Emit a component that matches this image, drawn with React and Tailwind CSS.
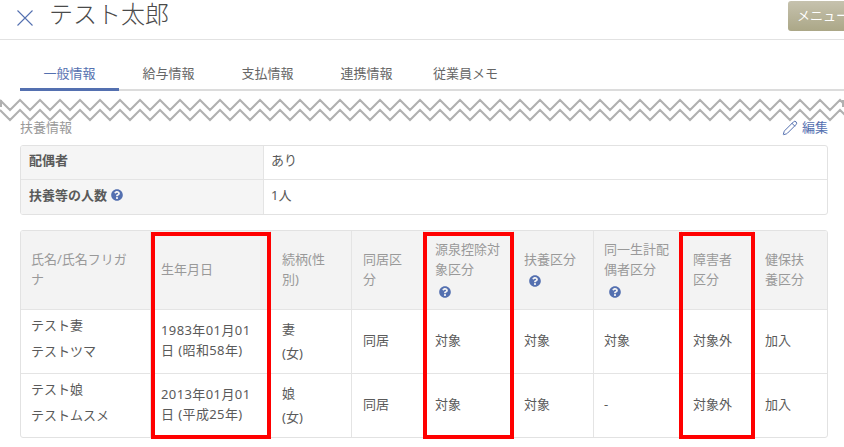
import { Pencil } from 'lucide-react'
import { FaQuestionCircle } from 'react-icons/fa'

const tabs = ['一般情報', '給与情報', '支払情報', '連携情報', '従業員メモ']

const rows = [
  { name: 'テスト妻', kana: 'テストツマ', birth: '1983年01月01日 (昭和58年)', rel: '妻', tax: '対象', dep: '対象', spouse: '対象' },
  { name: 'テスト娘', kana: 'テストムスメ', birth: '2013年01月01日 (平成25年)', rel: '娘', tax: '対象', dep: '対象', spouse: '-' },
]

const Help = ({ className = '' }) => <FaQuestionCircle className={`inline-block text-[12px] text-[#5470b0] ${className}`} />

const zigzag = (y) => {
  const pts = []
  for (let i = 0; i <= 43; i++) pts.push(`${i * 20},${y}`, `${i * 20 + 10},${y + 10}`)
  return pts.join(' ')
}

function Head({ children, className = 'pr-[16px] pl-[11px]' }) {
  return <th className={`border-r border-[#e4e4e4] pb-[2px] text-left align-middle font-normal leading-[20px] text-[#999] last:border-r-0 ${className}`}>{children}</th>
}

function Td({ children, className = 'pb-[2px] pl-[11px]' }) {
  return <td className={`border-t border-r border-[#e4e4e4] pr-[16px] align-middle last:border-r-0 ${className}`}>{children}</td>
}

export default function App() {
  return (
    <div className="relative h-[447px] w-[844px] overflow-hidden bg-white text-[13px] text-[#5a5a5a] font-['Noto_Sans','Noto_Sans_CJK_JP','Liberation_Sans',sans-serif]">
      <header className="flex h-[40px] items-start justify-between border-b border-[#e2e2e2]">
        <div className="flex items-center pl-[17px]">
          <svg width="16" height="16" viewBox="0 0 16 16" className="mt-[8px]" fill="none" stroke="#5470b0" strokeWidth="1.1">
            <path d="M0.5 0.5 L15.5 15.5 M15.5 0.5 L0.5 15.5" />
          </svg>
          <h1 className="mt-px ml-[16px] text-[24px] leading-[26px] font-light text-[#4a4a4a]">テスト太郎</h1>
        </div>
        <div className="mt-px h-[30px] w-[56px] overflow-hidden rounded-l-[3px] bg-gradient-to-b from-[#c6c2ae] to-[#aba787] pl-[9px] text-[13px] leading-[28px] whitespace-nowrap text-white">メニュー</div>
      </header>

      <nav className="mt-[27px] ml-[20px] flex h-[24px] border-b-2 border-[#dcdcdc]">
        {tabs.map((tab, i) => (
          <div key={tab} className={`-mb-[2px] h-[24px] w-[99px] text-center leading-[12px] ${i === 0 ? 'border-b-[3px] border-[#5470b0] text-[#5470b0]' : 'text-[#666]'}`}>
            {tab}
          </div>
        ))}
      </nav>

      <svg width="844" height="24" className="mt-[7px] block" fill="none" stroke="#b0b0b0" strokeWidth="2">
        <path d="M1 2 V9 M843 2 V9" />
        <polyline points={zigzag(2)} />
        <polyline points={zigzag(12)} />
      </svg>

      <div className="mt-[-6px] flex h-[24px] items-center justify-between pr-[16px] pl-[20px]">
        <span className="text-[#999]">扶養情報</span>
        <span className="flex items-center gap-[4px] text-[#5470b0]">
          <Pencil size={16} strokeWidth={1.5} />編集
        </span>
      </div>

      <table className="mx-[20px] mt-[5px] w-[808px] table-fixed border-separate border-spacing-0 overflow-hidden rounded-[3px] border border-[#e2e2e2]">
        <tbody>
          <tr className="h-[34px]">
            <th className="w-[243px] border-r border-b border-[#e4e4e4] bg-[#f5f5f5] pb-[3px] pl-[8px] text-left font-bold">配偶者</th>
            <td className="border-b border-[#e4e4e4] pb-[3px] pl-[7px]">あり</td>
          </tr>
          <tr className="h-[34px]">
            <th className="border-r border-[#e4e4e4] bg-[#f5f5f5] pb-[3px] pl-[8px] text-left font-bold">扶養等の人数 <Help className="ml-[1px] align-[-1px]" /></th>
            <td className="pb-[3px] pl-[7px]">1人</td>
          </tr>
        </tbody>
      </table>

      <div className="relative mx-[20px] mt-[15px] w-[808px]">
        <table className="w-full table-fixed border-separate border-spacing-0 overflow-hidden rounded-[3px] border border-[#e2e2e2]">
          <colgroup>
            <col className="w-[130px]" />
            <col className="w-[120px]" />
            <col className="w-[81px]" />
            <col className="w-[72px]" />
            <col className="w-[90px]" />
            <col className="w-[80px]" />
            <col className="w-[88px]" />
            <col className="w-[72px]" />
            <col />
          </colgroup>
          <thead>
            <tr className="h-[78px] bg-[#f3f3f3]">
              <Head className="pr-[16px] pl-[10px]">氏名/氏名フリガナ</Head>
              <Head className="pr-[16px] pl-[10px]">生年月日</Head>
              <Head>続柄(性別)</Head>
              <Head>同居区分</Head>
              <Head className="pr-[9px] pl-[11px]">源泉控除対象区分<br /><Help className="mt-[3px] ml-[4px]" /></Head>
              <Head className="pr-[16px] pl-[10px]">扶養区分<br /><Help className="ml-[5px]" /></Head>
              <Head className="pr-[10px] pl-[10px]">同一生計配偶者区分<br /><Help className="mt-[3px] ml-[5px]" /></Head>
              <Head>障害者区分</Head>
              <Head>健保扶養区分</Head>
            </tr>
          </thead>
          <tbody>
            {rows.map((row) => (
              <tr key={row.name} className="h-[64px]">
                <Td className="pb-[7px] pl-[10px] leading-[26px]">{row.name}<br />{row.kana}</Td>
                <Td className="pb-[3px] pl-[10px] leading-[20px] tracking-[0.4px]">{row.birth}</Td>
                <Td className="pb-[1px] pl-[11px] leading-[24px]">{row.rel}<br />(女)</Td>
                <Td>同居</Td>
                <Td>{row.tax}</Td>
                <Td className="pb-[2px] pl-[10px]">{row.dep}</Td>
                <Td className="pb-[2px] pl-[10px]">{row.spouse}</Td>
                <Td>対象外</Td>
                <Td>加入</Td>
              </tr>
            ))}
          </tbody>
        </table>
        {/* red highlight boxes drawn over the table */}
        <div className="absolute top-[2px] -bottom-px left-[131px] w-[120px] border-4 border-[#f00]" />
        <div className="absolute top-[2px] -bottom-px left-[403px] w-[91px] border-4 border-[#f00]" />
        <div className="absolute top-[2px] -bottom-px left-[659px] w-[76px] border-4 border-[#f00]" />
      </div>
    </div>
  )
}
